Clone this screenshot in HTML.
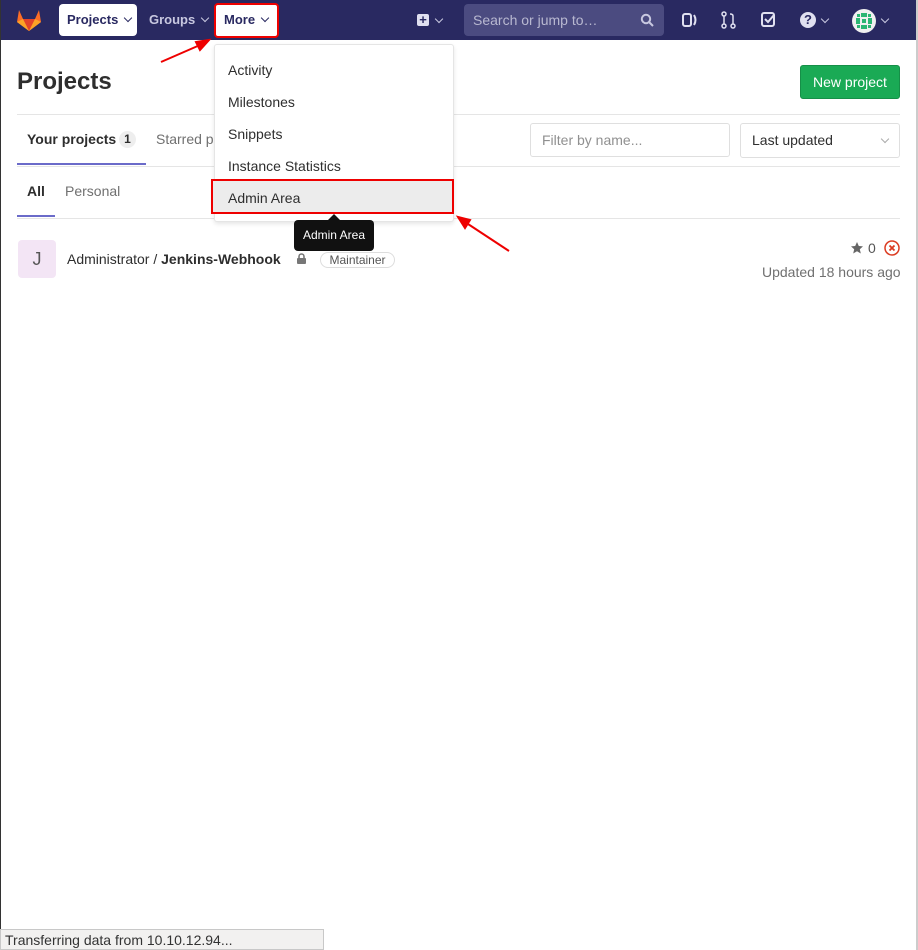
<!DOCTYPE html>
<html><head><meta charset="utf-8"><style>
*{box-sizing:border-box;margin:0;padding:0}
body{width:918px;height:950px;overflow:hidden;background:#fff;font-family:"Liberation Sans",sans-serif;position:relative;color:#2e2e2e;font-size:14px}
.a{position:absolute}
.nav{left:0;top:0;width:918px;height:40px;background:#292961}
.nb{top:4px;height:32px;border-radius:4px;font-size:13px;font-weight:bold;line-height:32px;padding-left:8px}
.chev{display:inline-block;width:6px;height:6px;border-right:1.6px solid currentColor;border-bottom:1.6px solid currentColor;transform:rotate(45deg);margin-left:7px;position:relative;top:-3px}
.chv{position:absolute;width:6px;height:6px;border-right:1.6px solid currentColor;border-bottom:1.6px solid currentColor;transform:rotate(45deg)}
.dd{left:214px;top:44px;width:240px;height:178px;background:#fff;border:1px solid #e5e5e5;border-radius:3px;box-shadow:0 2px 4px rgba(0,0,0,.1)}
.di{position:absolute;left:13px;font-size:14px;color:#2e2e2e}
</style></head><body>
<div class="a" style="left:0;top:0;width:1px;height:950px;background:#333;z-index:5"></div>
<div class="a" style="left:916px;top:0;width:2px;height:950px;background:#ccc;z-index:5"></div>
<div class="a nav"></div>
<svg class="a" style="left:16px;top:8px" width="26" height="24" viewBox="0 0 26 24"><path d="M13 23L1 14 3 2l4 9h12l4-9 2 12z" fill="#fc6d26"/><path d="M13 23L7 11h12z" fill="#e24329"/><path d="M13 23L1 14l6-3z" fill="#fca326"/><path d="M13 23l12-9-6-3z" fill="#fca326"/></svg>
<div class="a nb" style="left:59px;width:78px;background:#fff;color:#292961">Projects<span class="chev"></span></div>
<div class="a nb" style="left:141px;width:70px;color:#c8c8e0">Groups<span class="chev"></span></div>
<div class="a nb" style="left:214px;width:65px;background:#fff;color:#292961;border:2px solid #e00;line-height:30px;top:3px;height:35px;padding-left:8px">More<span class="chev"></span></div>
<div class="a" style="left:417px;top:14px;width:12px;height:12px;background:#e0e0f0;border-radius:2px;color:#292961;font-weight:bold;font-size:13px;line-height:12px;text-align:center">+</div>
<span class="chv" style="left:436px;top:16px;color:#c8c8e0"></span>
<div class="a" style="left:464px;top:4px;width:200px;height:32px;background:#4b4b80;border-radius:4px;color:#b8b8d0;font-size:14px;line-height:32px;padding-left:9px">Search or jump to…</div>
<svg class="a" style="left:640px;top:13px" width="14" height="14"><circle cx="6" cy="6" r="4.2" stroke="#c8c8e0" stroke-width="2" fill="none"/><path d="M9 9l4 4" stroke="#c8c8e0" stroke-width="2"/></svg>
<svg class="a" style="left:682px;top:12px" width="16" height="16"><rect x="1" y="2" width="8" height="12" rx="2" stroke="#e0e0f0" stroke-width="2" fill="none"/><path d="M12 3q3 5 0 10" stroke="#e0e0f0" stroke-width="2" fill="none"/></svg>
<svg class="a" style="left:721px;top:11px" width="16" height="18"><circle cx="3" cy="3" r="2" stroke="#e0e0f0" stroke-width="1.5" fill="none"/><circle cx="3" cy="15" r="2" stroke="#e0e0f0" stroke-width="1.5" fill="none"/><circle cx="12" cy="15" r="2" stroke="#e0e0f0" stroke-width="1.5" fill="none"/><path d="M3 5v8M12 13V5Q12 3 9 3" stroke="#e0e0f0" stroke-width="1.5" fill="none"/></svg>
<svg class="a" style="left:761px;top:12px" width="16" height="16"><rect x="1" y="1" width="12" height="13" rx="2" stroke="#e0e0f0" stroke-width="2" fill="none"/><path d="M4 7l3 3 6-7" stroke="#e0e0f0" stroke-width="2" fill="none"/></svg>
<div class="a" style="left:800px;top:12px;width:16px;height:16px;border-radius:50%;background:#e0e0f0;color:#292961;font-weight:bold;font-size:13px;text-align:center;line-height:16px">?</div>
<span class="chv" style="left:822px;top:16px;color:#c8c8e0"></span>
<svg class="a" style="left:852px;top:9px" width="24" height="24"><circle cx="12" cy="12" r="12" fill="#f0f0f0"/><g fill="#2bb673"><rect x="4" y="9" width="4" height="6"/><rect x="16" y="9" width="4" height="6"/><rect x="9" y="4" width="6" height="4"/><rect x="9" y="16" width="6" height="4"/><rect x="10" y="10" width="4" height="4"/><rect x="5" y="5" width="3" height="3"/><rect x="16" y="5" width="3" height="3"/><rect x="5" y="16" width="3" height="3"/><rect x="16" y="16" width="3" height="3"/></g></svg>
<span class="chv" style="left:882px;top:16px;color:#c8c8e0"></span>

<div class="a" style="left:17px;top:68px;font-size:24px;font-weight:bold;color:#2e2e2e">Projects</div>
<div class="a" style="left:800px;top:65px;width:100px;height:34px;background:#1aaa55;border:1px solid #168f48;border-radius:3px;color:#fff;font-size:14px;line-height:32px;text-align:center">New project</div>
<div class="a" style="left:17px;top:114px;width:883px;height:1px;background:#e5e5e5"></div>
<div class="a" style="left:27px;top:131px;font-size:14px;font-weight:bold;color:#2e2e2e">Your projects</div>
<div class="a" style="left:119px;top:131px;width:17px;height:17px;border-radius:9px;background:#eee;font-size:12px;font-weight:bold;text-align:center;line-height:17px">1</div>
<div class="a" style="left:156px;top:131px;font-size:14px;color:#707070">Starred p</div>
<div class="a" style="left:17px;top:163px;width:129px;height:2px;background:#6b6bc9"></div>
<div class="a" style="left:17px;top:166px;width:883px;height:1px;background:#e5e5e5"></div>
<div class="a" style="left:530px;top:123px;width:200px;height:34px;border:1px solid #dfdfdf;border-radius:3px;color:#909090;font-size:14px;line-height:32px;padding-left:11px">Filter by name...</div>
<div class="a" style="left:740px;top:123px;width:160px;height:35px;border:1px solid #dfdfdf;border-radius:3px;color:#2e2e2e;font-size:14px;line-height:33px;padding-left:11px">Last updated</div>
<span class="chv" style="left:882px;top:136px;color:#aaa"></span>
<div class="a" style="left:27px;top:183px;font-size:14px;font-weight:bold">All</div>
<div class="a" style="left:65px;top:183px;font-size:14px;color:#707070">Personal</div>
<div class="a" style="left:17px;top:215px;width:38px;height:2px;background:#6b6bc9"></div>
<div class="a" style="left:17px;top:218px;width:883px;height:1px;background:#e5e5e5"></div>

<div class="a" style="left:18px;top:240px;width:38px;height:38px;border-radius:4px;background:#f3e5f5;color:#555;font-size:18px;text-align:center;line-height:38px">J</div>
<div class="a" style="left:67px;top:251px;font-size:14px;color:#2e2e2e">Administrator / <b>Jenkins-Webhook</b></div>
<svg class="a" style="left:296px;top:253px" width="11" height="12"><path d="M3 5V3.5a2.5 2.5 0 015 0V5" stroke="#777" stroke-width="1.6" fill="none"/><rect x="1" y="5" width="9" height="6" rx="1" fill="#777"/></svg>
<div class="a" style="left:320px;top:252px;width:75px;height:16px;border:1px solid #ddd;border-radius:8px;font-size:12px;color:#555;text-align:center;line-height:14px">Maintainer</div>
<svg class="a" style="left:851px;top:242px" width="12" height="12"><path d="M6 0l1.8 4 4.2.4-3.2 2.8 1 4.3L6 9.3 2.2 11.5l1-4.3L0 4.4 4.2 4z" fill="#666"/></svg>
<div class="a" style="left:868px;top:240px;font-size:14px;color:#555">0</div>
<svg class="a" style="left:884px;top:240px" width="16" height="16"><circle cx="8" cy="8" r="7" stroke="#db3b21" stroke-width="1.5" fill="none"/><path d="M5.5 5.5l5 5M10.5 5.5l-5 5" stroke="#db3b21" stroke-width="1.8"/></svg>
<div class="a" style="left:762px;top:264px;font-size:14px;color:#707070">Updated 18 hours ago</div>

<div class="a dd"></div>
<div class="di a" style="left:228px;top:62px">Activity</div>
<div class="di a" style="left:228px;top:94px">Milestones</div>
<div class="di a" style="left:228px;top:126px">Snippets</div>
<div class="di a" style="left:228px;top:158px">Instance Statistics</div>
<div class="a" style="left:211px;top:179px;width:243px;height:35px;background:#ececec;border:2px solid #e00"></div>
<div class="di a" style="left:228px;top:190px">Admin Area</div>
<div class="a" style="left:294px;top:220px;width:80px;height:31px;background:#111;border-radius:4px;color:#fff;font-size:12px;text-align:center;line-height:31px">Admin Area</div>
<div class="a" style="left:328px;top:214px;width:0;height:0;border:6px solid transparent;border-bottom-color:#111;border-top:0"></div>

<svg class="a" style="left:0;top:0;z-index:6" width="918" height="300"><g stroke="#e00" stroke-width="2" fill="#e00"><path d="M161 62L200 45"/><path d="M209 40l-13 2 4 8z"/><path d="M509 251L468 224"/><path d="M458 217l7 11 5-8z"/></g></svg>

<div class="a" style="left:0;top:929px;width:324px;height:21px;background:#f2f1f0;border:1px solid #c8c8c8;font-size:14px;color:#333;line-height:20px;padding-left:4px;z-index:7">Transferring data from 10.10.12.94...</div>
</body></html>
